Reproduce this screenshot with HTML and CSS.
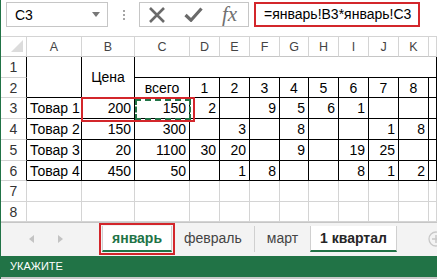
FILE: index.html
```html
<!DOCTYPE html>
<html lang="ru">
<head>
    <meta charset="UTF-8">
    <title>Книга1 - январь</title>
    <link rel="stylesheet" href="styles.css">
</head>
<body>
    <div class="app">
        <!-- formula bar -->
        <div class="formula-bar">
            <div class="name-box">
                <span>C3</span>
                <svg class="dd" width="8" height="5" viewBox="0 0 8 5"><path d="M0 0h8L4 5z" fill="#777"/></svg>
            </div>
            <div class="grip"><i></i><i></i><i></i></div>
            <div class="fx-buttons">
                <svg width="18" height="16" viewBox="0 0 18 16"><path d="M2 1L16 15M16 1L2 15" stroke="#6a6a6a" stroke-width="2.6" fill="none"/></svg>
                <svg width="19" height="15" viewBox="0 0 19 15"><path d="M1.5 8L7 13.2L17.5 1.5" stroke="#6a6a6a" stroke-width="3.2" fill="none"/></svg>
                <span class="fx">fx</span>
            </div>
            <div class="formula-input">=январь!B3*январь!C3</div>
        </div>

        <!-- sheet grid -->
        <div class="sheet">
            <div class="grid">
                <div class="cell corner"><span class="tri"></span></div>
                <div class="cell ch">A</div>
                <div class="cell ch">B</div>
                <div class="cell ch">C</div>
                <div class="cell ch">D</div>
                <div class="cell ch">E</div>
                <div class="cell ch">F</div>
                <div class="cell ch">G</div>
                <div class="cell ch">H</div>
                <div class="cell ch">I</div>
                <div class="cell ch">J</div>
                <div class="cell ch">K</div>
                <div class="cell ch"></div>

                <div class="cell rh edge">1</div>
                <div class="cell b tall"></div>
                <div class="cell b tall ctr">Цена</div>
                <div class="cell b wide"></div>

                <div class="cell rh edge">2</div>
                <div class="cell b ctr">всего</div>
                <div class="cell b ctr">1</div>
                <div class="cell b ctr">2</div>
                <div class="cell b ctr">3</div>
                <div class="cell b ctr">4</div>
                <div class="cell b ctr">5</div>
                <div class="cell b ctr">6</div>
                <div class="cell b ctr">7</div>
                <div class="cell b ctr">8</div>
                <div class="cell b"></div>

                <div class="cell rh edge">3</div>
                <div class="cell b">Товар 1</div>
                <div class="cell b num">200</div>
                <div class="cell b num">150</div>
                <div class="cell b num">2</div>
                <div class="cell b num"></div>
                <div class="cell b num">9</div>
                <div class="cell b num">5</div>
                <div class="cell b num">6</div>
                <div class="cell b num">1</div>
                <div class="cell b num"></div>
                <div class="cell b num"></div>
                <div class="cell b"></div>

                <div class="cell rh edge">4</div>
                <div class="cell b">Товар 2</div>
                <div class="cell b num">150</div>
                <div class="cell b num">300</div>
                <div class="cell b num"></div>
                <div class="cell b num">3</div>
                <div class="cell b num"></div>
                <div class="cell b num">8</div>
                <div class="cell b num"></div>
                <div class="cell b num"></div>
                <div class="cell b num">1</div>
                <div class="cell b num">8</div>
                <div class="cell b"></div>

                <div class="cell rh edge">5</div>
                <div class="cell b">Товар 3</div>
                <div class="cell b num">20</div>
                <div class="cell b num">1100</div>
                <div class="cell b num">30</div>
                <div class="cell b num">20</div>
                <div class="cell b num"></div>
                <div class="cell b num">9</div>
                <div class="cell b num"></div>
                <div class="cell b num">19</div>
                <div class="cell b num">25</div>
                <div class="cell b num"></div>
                <div class="cell b"></div>

                <div class="cell rh edge">6</div>
                <div class="cell b">Товар 4</div>
                <div class="cell b num">450</div>
                <div class="cell b num">50</div>
                <div class="cell b num"></div>
                <div class="cell b num">1</div>
                <div class="cell b num">8</div>
                <div class="cell b num"></div>
                <div class="cell b num"></div>
                <div class="cell b num">8</div>
                <div class="cell b num">1</div>
                <div class="cell b num">2</div>
                <div class="cell b"></div>

                <div class="cell rh">7</div>
                <div class="cell"></div><div class="cell"></div><div class="cell"></div>
                <div class="cell"></div><div class="cell"></div><div class="cell"></div>
                <div class="cell"></div><div class="cell"></div><div class="cell"></div>
                <div class="cell"></div><div class="cell"></div><div class="cell"></div>

                <div class="cell rh">8</div>
                <div class="cell"></div><div class="cell"></div><div class="cell"></div>
                <div class="cell"></div><div class="cell"></div><div class="cell"></div>
                <div class="cell"></div><div class="cell"></div><div class="cell"></div>
                <div class="cell"></div><div class="cell"></div><div class="cell"></div>
            </div>
            <div class="copy-ants"></div>
            <div class="mark-cells"></div>
        </div>

        <!-- sheet tabs -->
        <div class="tab-bar">
            <div class="nav">
                <svg width="5" height="8" viewBox="0 0 5 8"><path d="M5 0v8L0 4z" fill="#c3c3c3"/></svg>
                <svg width="5" height="8" viewBox="0 0 5 8"><path d="M0 0v8l5-4z" fill="#c3c3c3"/></svg>
            </div>
            <div class="tab active green marked">январь</div>
            <div class="tab">февраль</div>
            <div class="tab">март</div>
            <div class="tab active">1 квартал</div>
            <svg class="add" width="16" height="16" viewBox="0 0 16 16"><circle cx="8" cy="8" r="7" fill="none" stroke="#c8c8c8" stroke-width="1.3"/><path d="M8 4v8M4 8h8" stroke="#c8c8c8" stroke-width="1.5"/></svg>
        </div>

        <div class="status">УКАЖИТЕ</div>
    </div>
</body>
</html>
```

FILE: styles.css
```css
/* Basic styling */
body {
    margin: 0;
    font-family: "Liberation Sans", Arial, sans-serif;
    background: #fff;
    color: #000;
}
.app {
    width: 437px;
    height: 279px;
    overflow: hidden;
    border-left: 1px solid #217346;
    box-sizing: border-box;
    background: #fff;
}

/* formula bar */
.formula-bar {
    height: 36px;
    display: flex;
    align-items: flex-start;
    padding-top: 2px;
    box-sizing: border-box;
}
.name-box {
    margin-left: 5px;
    width: 102px;
    height: 25px;
    border: 1px solid #c6c6c6;
    box-sizing: border-box;
    display: flex;
    align-items: center;
    justify-content: space-between;
    padding: 0 7px 0 8px;
    font-size: 14px;
}
.grip {
    width: 31px;
    height: 25px;
    display: flex;
    flex-direction: column;
    align-items: center;
    justify-content: center;
    gap: 2px;
}
.grip i {
    width: 2px;
    height: 2px;
    background: #a6a6a6;
}
.fx-buttons {
    width: 110px;
    height: 25px;
    border: 1px solid #c6c6c6;
    box-sizing: border-box;
    display: flex;
    align-items: center;
    padding-left: 8px;
    gap: 18px;
}
.fx {
    font-family: "Liberation Serif", "Times New Roman", serif;
    font-style: italic;
    font-size: 21px;
    color: #707070;
    margin-left: 1px;
}
.formula-input {
    margin-left: 5px;
    width: 166px;
    height: 25px;
    border: 2px solid #d3262b;
    box-sizing: border-box;
    padding-left: 8px;
    font-size: 14px;
    line-height: 21px;
}

/* grid */
.sheet {
    position: relative;
}
.grid {
    display: grid;
    grid-template-columns: 26px 55px 53px 55px 30px 30px 30px 29px 30px 30px 30px 30px 1fr;
    grid-template-rows: 21px 21px 20px 21px 21px 21px 20px 21px 20px;
    font-size: 14px;
}
.cell {
    border-right: 1px solid #d4d4d4;
    border-bottom: 1px solid #d4d4d4;
    box-sizing: border-box;
    display: flex;
    align-items: center;
    padding: 0 3px;
    white-space: nowrap;
    overflow: hidden;
}
.ch {
    justify-content: center;
    font-size: 12.5px;
    color: #444;
    border-top: 1px solid #d4d4d4;
    border-bottom-color: #c6c6c6;
}
.corner {
    position: relative;
    border-top: 1px solid #d4d4d4;
    border-bottom-color: #c6c6c6;
}
.tri {
    position: absolute;
    right: 3px;
    bottom: 4px;
    width: 0;
    height: 0;
    border-left: 12px solid transparent;
    border-bottom: 12px solid #dcdcdc;
}
.rh {
    justify-content: center;
    color: #333;
    font-size: 14px;
}
.rh.edge {
    border-right-color: #000;
}
.b {
    border-color: #000;
}
.tall {
    grid-row: span 2;
}
.wide {
    grid-column: 4 / -1;
}
.ctr {
    justify-content: center;
}
.num {
    justify-content: flex-end;
}

/* copy marquee on C3 and the marked range */
.copy-ants {
    position: absolute;
    left: 134px;
    top: 63px;
    width: 56px;
    height: 21px;
    border: 2px dashed #217346;
    box-sizing: border-box;
}
.mark-cells {
    position: absolute;
    left: 80px;
    top: 61px;
    width: 114px;
    height: 25px;
    border: 2px solid #d3262b;
    box-sizing: border-box;
}

/* sheet tabs */
.tab-bar {
    height: 34px;
    border-top: 1px solid #c6c6c6;
    box-sizing: border-box;
    background: #f3f3f3;
    display: flex;
    align-items: flex-start;
    padding-top: 3px;
}
.nav {
    width: 101px;
    height: 26px;
    display: flex;
    align-items: center;
    gap: 24px;
    padding-left: 28px;
    box-sizing: border-box;
}
.tab {
    height: 26px;
    padding: 0 12px;
    font-size: 14px;
    color: #444;
    line-height: 24px;
    border-left: 1px solid #d0d0d0;
    box-sizing: border-box;
}
.tab.active {
    padding: 0 9px;
    background: #fff;
    font-weight: bold;
    color: #262626;
    border-right: 1px solid #d0d0d0;
    border-bottom: 2px solid #217346;
}
.tab.active + .tab {
    border-left: none;
}
.tab.green {
    color: #217346;
}
.tab.marked {
    outline: 2px solid #d3262b;
    outline-offset: 1px;
}
.add {
    margin-left: auto;
    margin-top: 5px;
    margin-right: -7px;
}

/* status bar */
.status {
    height: 21px;
    background: #217346;
    color: #fff;
    font-size: 11px;
    line-height: 21px;
    padding-left: 9px;
    border-bottom: 2px solid #c8c8c8;
    box-sizing: content-box;
}
```
